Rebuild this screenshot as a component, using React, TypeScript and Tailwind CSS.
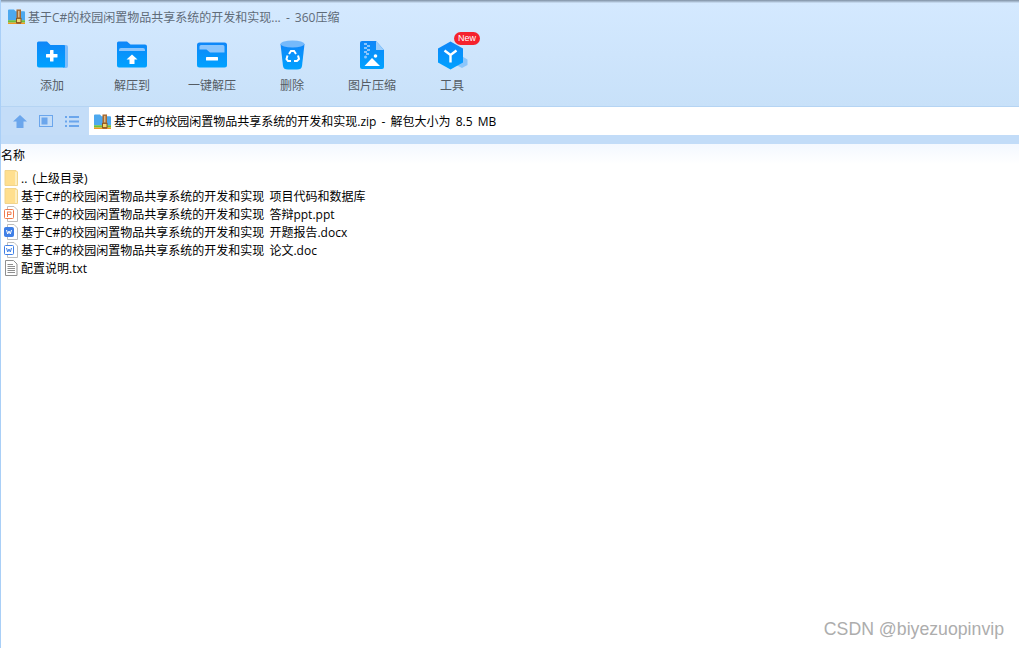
const font = '"Open Sans", "Noto Sans CJK SC", sans-serif';

function ZipIcon() {
  return (
    <svg width="17" height="15" viewBox="0 0 17 16" preserveAspectRatio="none" className="shrink-0">
      <path d="M0 1.500 Q0 0.500 1 0.500 H6 L7.500 2.500 H16 Q17 2.500 17 3.500 V12 H0 Z" fill="#4da8ee" />
      <rect x="0" y="12" width="17" height="2.500" fill="#6cbf3c" />
      <rect x="0" y="14.500" width="17" height="1.500" fill="#f29a1f" />
      <rect x="8.500" y="0.500" width="4.500" height="15.500" fill="#a8692e" />
      <rect x="10" y="2" width="1.500" height="7" fill="#d9b98c" />
      <rect x="8.500" y="10" width="4.500" height="4.500" fill="#f3d774" stroke="#8a5520" strokeWidth="1" />
    </svg>
  );
}

const grad = (
  <defs>
    <linearGradient id="blueg" x1="0" y1="0" x2="0" y2="1">
      <stop offset="0" stopColor="#0f86f8" />
      <stop offset="1" stopColor="#00a2ff" />
    </linearGradient>
  </defs>
);

function AddIcon() {
  return (
    <svg width="32" height="28" viewBox="0 0 32 28">
      {grad}
      <path d="M28 4 H30 Q32 4 32 6 V25 Q32 27 30 27 H27 Z" fill="#7fbdfb" />
      <path d="M1 2 Q1 0.500 2.500 0.500 H11 L14.500 4 H28 Q29 4 29 5 V25.500 Q29 26.500 28 26.500 H3 Q1 26.500 1 24.500 Z" fill="url(#blueg)" />
      <rect x="10" y="13" width="11.500" height="3.500" rx="0.500" fill="#fff" />
      <rect x="14" y="9" width="3.500" height="11.500" rx="0.500" fill="#fff" />
    </svg>
  );
}
function ExtractToIcon() {
  return (
    <svg width="32" height="28" viewBox="0 0 32 28">
      <path d="M1 2 Q1 0.500 2.500 0.500 H11 L14.500 3.500 H29 Q31 3.500 31 5.500 V24.500 Q31 26.500 29 26.500 H3 Q1 26.500 1 24.500 Z" fill="url(#blueg)" />
      <path d="M3 9 Q3 7 5 7 H27 Q29 7 29 9 V10 H3 Z" fill="#8ac5fd" />
      <path d="M16 13.500 L21.500 18.500 H18.500 V23 H13.500 V18.500 H10.500 Z" fill="#fff" />
    </svg>
  );
}
function ExtractOneIcon() {
  return (
    <svg width="32" height="26" viewBox="0 0 32 26">
      <rect x="1" y="0.500" width="30" height="25" rx="2.500" fill="url(#blueg)" />
      <path d="M3.500 4.500 Q3.500 3 5 3 H27 Q28.500 3 28.500 4.500 V10.500 H14 L10.500 7.500 H3.500 Z" fill="#8ac5fd" />
      <rect x="10" y="15" width="12" height="3.500" rx="0.500" fill="#fff" />
    </svg>
  );
}
function TrashIcon() {
  return (
    <svg width="25" height="30" viewBox="0 0 25 30">
      <path d="M0.500 4 L3 26 Q3.400 29.500 8 29.500 H17 Q21.600 29.500 22 26 L24.500 4 Z" fill="url(#blueg)" />
      <ellipse cx="12.500" cy="4" rx="12" ry="3.500" fill="#75b9fb" />
      <g fill="none" stroke="#fff" strokeWidth="2">
        <path d="M9 14 L11 11 H14 L16 14" />
        <path d="M18 15.500 L19 19 L17 21 H14" />
        <path d="M11 21 H8 L6.500 19 L7.500 15.500" />
      </g>
    </svg>
  );
}
function ImageZipIcon() {
  return (
    <svg width="24" height="28" viewBox="0 0 24 28">
      <path d="M2 0 H16 L24 9 V26 Q24 28 22 28 H2 Q0 28 0 26 V2 Q0 0 2 0 Z" fill="url(#blueg)" />
      <path d="M16 0 L24 9 H16 Z" fill="#9ccdfb" />
      <g fill="#8ac5fd">
        <rect x="4" y="2" width="3" height="2" />
        <rect x="7" y="4" width="3" height="2" />
        <rect x="4" y="6" width="3" height="2" />
        <rect x="7" y="8" width="3" height="2" />
        <rect x="4" y="10" width="3" height="2" />
        <rect x="6" y="12" width="3" height="2" />
      </g>
      <circle cx="5.500" cy="16" r="1.500" fill="#8ac5fd" />
      <circle cx="15.500" cy="15" r="1.800" fill="#fff" />
      <path d="M4.500 25 L12 17 L20 25 Z" fill="#fff" />
    </svg>
  );
}
function ToolIcon() {
  return (
    <svg width="30" height="29" viewBox="0 0 30 29" className="ml-[2px]">
      <path d="M20 13 L29.500 18.500 V24 L24 27 L18 24 Z" fill="#8cc6fb" />
      <path d="M12.500 0.500 L25 7.500 V21.500 L12.500 28.500 L0 21.500 V7.500 Z" fill="url(#blueg)" />
      <path d="M6.500 9.500 L12.500 14 L18.500 9.500 M12.500 14 V21.500" fill="none" stroke="#fff" strokeWidth="2.400" />
    </svg>
  );
}

function UpIcon() {
  return (
    <svg width="14" height="13" viewBox="0 0 14 13">
      <path d="M7 0 L14 6.500 H10.500 V13 H3.500 V6.500 H0 Z" fill="#6ba6ec" />
    </svg>
  );
}
function PreviewIcon() {
  return (
    <svg width="14" height="12" viewBox="0 0 14 12">
      <rect x="0.500" y="0.500" width="13" height="11" fill="#c4ddf8" stroke="#6ba6ec" />
      <rect x="2.500" y="2.500" width="6" height="7" fill="#6ba6ec" />
    </svg>
  );
}
function ListIcon() {
  return (
    <svg width="14" height="11" viewBox="0 0 14 11" fill="#6ba6ec">
      <rect x="0" y="0" width="2" height="2" />
      <rect x="4" y="0" width="10" height="2" />
      <rect x="0" y="4.500" width="2" height="2" />
      <rect x="4" y="4.500" width="10" height="2" />
      <rect x="0" y="9" width="2" height="2" />
      <rect x="4" y="9" width="10" height="2" />
    </svg>
  );
}

function FolderFile() {
  return (
    <svg width="14" height="16" viewBox="0 0 14 16">
      <path d="M1 0.500 H12 L13.500 2 V15.500 H1 Z" fill="#ffdf8e" stroke="#f1d48b" />
      <rect x="11" y="2" width="2" height="13" fill="#fdeebf" />
    </svg>
  );
}
function PptFile() {
  return (
    <svg width="14" height="16" viewBox="0 0 14 16">
      <path d="M3.500 0.500 H10 L13.500 4 V15.500 H3.500 Z" fill="#fff" stroke="#bdbdbd" />
      <rect x="0.500" y="3.500" width="9" height="9" rx="1" fill="#fff" stroke="#ef7a4d" />
      <path d="M3 6 H7 V8.500 H3.500 M3.500 6 V11" fill="none" stroke="#ef7a4d" />
    </svg>
  );
}
function WordFile({ solid }: { solid?: boolean }) {
  return (
    <svg width="14" height="16" viewBox="0 0 14 16">
      <path d="M3.500 0.500 H10 L13.500 4 V15.500 H3.500 Z" fill="#fff" stroke="#bdbdbd" />
      <rect x="0.500" y="3.500" width="9" height="9" rx="1" fill={solid ? "#3f7fe6" : "#fff"} stroke="#3f7fe6" />
      <path d="M2.500 6 L3.700 10 L5 7 L6.300 10 L7.500 6" fill="none" stroke={solid ? "#fff" : "#3f7fe6"} />
    </svg>
  );
}
function TxtFile() {
  return (
    <svg width="14" height="16" viewBox="0 0 14 16">
      <path d="M1.500 0.500 H9.500 L13 4 V15.500 H1.500 Z" fill="#fff" stroke="#8f8f8f" />
      <path d="M3.500 4.500 H9 M3.500 6.500 H11 M3.500 8.500 H11 M3.500 10.500 H11 M3.500 12.500 H11" stroke="#8f8f8f" />
    </svg>
  );
}

const tools = [
  { label: "添加", icon: <AddIcon /> },
  { label: "解压到", icon: <ExtractToIcon /> },
  { label: "一键解压", icon: <ExtractOneIcon /> },
  { label: "删除", icon: <TrashIcon /> },
  { label: "图片压缩", icon: <ImageZipIcon /> },
  { label: "工具", icon: <ToolIcon />, badge: true },
];

const base = "基于C#的校园闲置物品共享系统的开发和实现";
const rows = [
  { name: ".. (上级目录)", icon: <FolderFile /> },
  { name: `${base} 项目代码和数据库`, icon: <FolderFile /> },
  { name: `${base} 答辩ppt.ppt`, icon: <PptFile /> },
  { name: `${base} 开题报告.docx`, icon: <WordFile solid /> },
  { name: `${base} 论文.doc`, icon: <WordFile /> },
  { name: "配置说明.txt", icon: <TxtFile /> },
];

export default function App() {
  return (
    <div
      className="relative flex h-[648px] w-[1019px] flex-col overflow-hidden border-l border-[#a9cff7] bg-white text-xs text-black [word-spacing:2px]"
      style={{ fontFamily: font }}
    >
      <div className="h-[3px] bg-gradient-to-b from-[#7f90a3] to-[#cfe4fa]" />
      <div className="flex h-[103px] flex-col bg-gradient-to-b from-[#d4e9ff] to-[#c8e1f9]">
        <div className="flex h-[27px] items-center gap-[3px] pl-[7px] text-[#5f6b78]">
          <ZipIcon />
          <span className="pt-[2px]">基于C#的校园闲置物品共享系统的开发和实现... - 360压缩</span>
        </div>
        <div className="flex pl-[11px]">
          {tools.map((t) => (
            <div key={t.label} className="relative flex h-[66px] w-[80px] flex-col items-center">
              <div className="flex h-[41px] items-center justify-center pt-[9px]">{t.icon}</div>
              <span className="mt-[6px] text-xs leading-[18px] text-[#555c64]">{t.label}</span>
              {t.badge && (
                <span
                  className="absolute left-[42px] top-[2px] flex h-[13px] w-[26px] items-center justify-center rounded-full bg-[#f5222d] text-[9px] leading-none text-white"
                  style={{ fontFamily: '"Liberation Sans", sans-serif' }}
                >
                  New
                </span>
              )}
            </div>
          ))}
        </div>
      </div>
      <div className="h-px bg-[#b5d4f3]" />
      <div className="flex h-[28px] bg-[#c4ddf8]">
        <div className="flex w-[88px] items-center pl-[12px]">
          <UpIcon />
          <div className="ml-[12px]"><PreviewIcon /></div>
          <div className="ml-[12px]"><ListIcon /></div>
        </div>
        <div className="flex flex-1 items-center gap-[3px] bg-white pl-[5px]">
          <ZipIcon />
          <span className="pt-[2px]">基于C#的校园闲置物品共享系统的开发和实现.zip - 解包大小为 8.5 MB</span>
        </div>
      </div>
      <div className="h-[9px] bg-[#c2dcf8]" />
      <div className="flex-1 bg-gradient-to-b from-[#f3f8ff] to-white to-[4%]">
        <div className="h-[22px] pt-[3px] leading-[18px]">名称</div>
        <ul className="pl-[3px] pt-[3px]">
          {rows.map((r) => (
            <li key={r.name} className="flex h-[18px] items-center gap-[3px]">
              {r.icon}
              <span className="pt-[2px] leading-[18px]">{r.name}</span>
            </li>
          ))}
        </ul>
      </div>
      <span
        className="absolute bottom-[7px] right-[15px] text-[17.7px] leading-[24px] text-[#adadad] [word-spacing:0]"
        style={{ fontFamily: '"Liberation Sans", sans-serif' }}
      >
        CSDN @biyezuopinvip
      </span>
    </div>
  );
}
